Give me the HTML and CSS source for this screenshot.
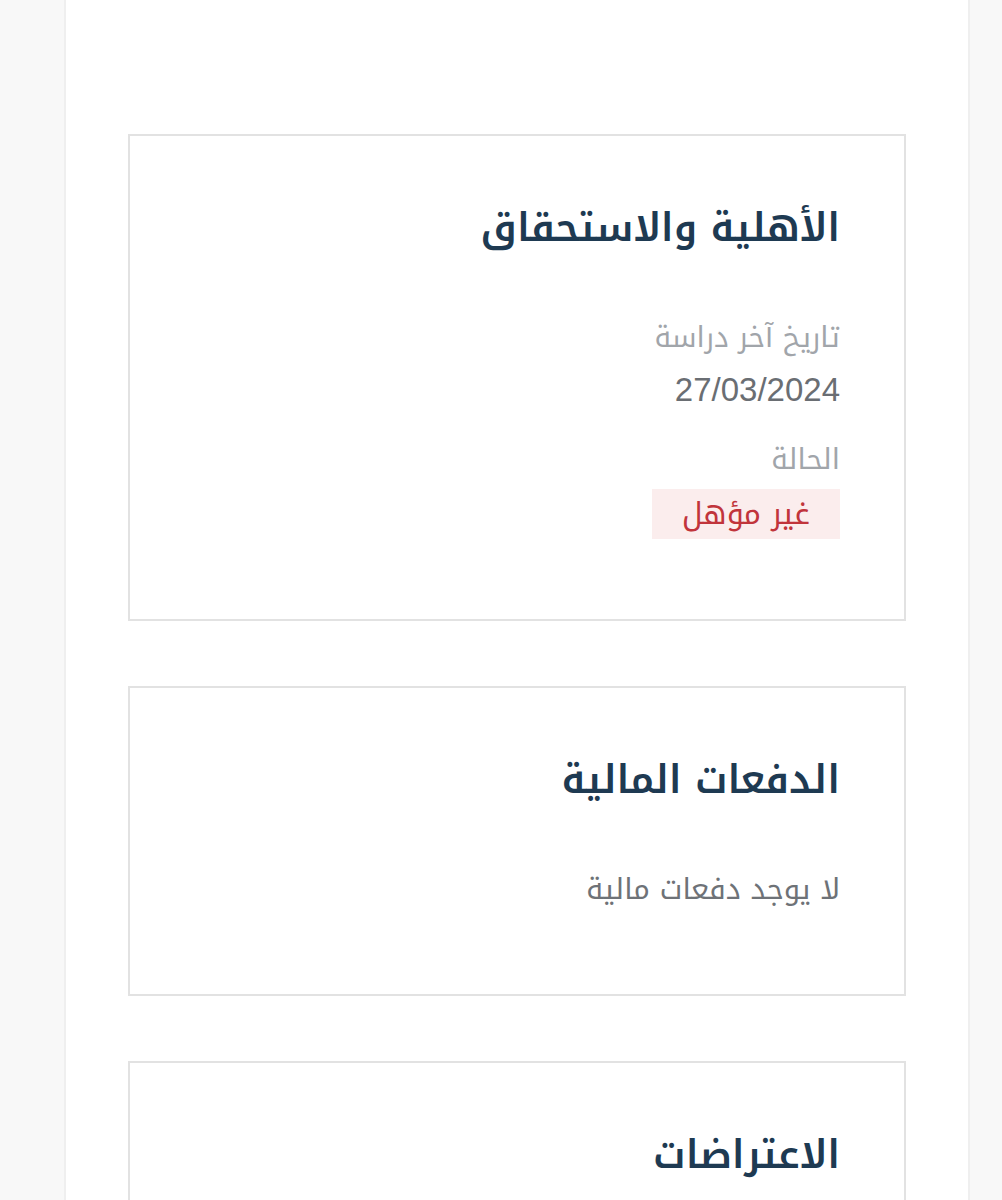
FILE: index.html
```html
<!DOCTYPE html>
<html lang="ar" dir="rtl">
<head>
<meta charset="UTF-8">
<meta name="viewport" content="width=device-width, initial-scale=1.0">
<title>الأهلية والاستحقاق</title>
<link rel="stylesheet" href="styles.css">
</head>
<body>

<div class="page">

    <div class="card">
        <h2 class="card-title">الأهلية والاستحقاق</h2>
        <div class="field">
            <div class="label">تاريخ آخر دراسة</div>
            <div class="value">27/03/2024</div>
        </div>
        <div class="field">
            <div class="label">الحالة</div>
            <span class="badge">غير مؤهل</span>
        </div>
    </div>

    <div class="card">
        <h2 class="card-title">الدفعات المالية</h2>
        <div class="empty">لا يوجد دفعات مالية</div>
    </div>

    <div class="card">
        <h2 class="card-title">الاعتراضات</h2>
    </div>

</div>

</body>
</html>
```

FILE: styles.css
```css
body {
    margin: 0;
    background: #f8f8f8;
    font-family: "Noto Kufi Arabic", "Droid Arabic Kufi", "DejaVu Sans", sans-serif;
}

.page {
    margin: 0 32px 0 64px;
    min-height: 1200px;
    background: #fff;
    border-left: 2px solid #efefef;
    border-right: 2px solid #efefef;
    padding: 134px 62px 0 62px;
    box-sizing: border-box;
}

.card {
    border: 2px solid #e2e2e2;
    padding: 62px 64px 80px;
    margin-bottom: 65px;
    display: flex;
    flex-direction: column;
    align-items: flex-start;
}

.card-title {
    margin: 0 0 58px;
    font-size: 39px;
    font-weight: 600;
    color: #1e3a52;
    line-height: 60px;
}

.field {
    display: flex;
    flex-direction: column;
    align-items: flex-start;
}

.field + .field {
    margin-top: 24px;
}

.label {
    font-size: 28.5px;
    color: #a1a5aa;
    line-height: 44px;
}

.value {
    margin-top: 6px;
    font-family: "Liberation Sans", sans-serif;
    font-size: 33px;
    color: #6a6e73;
    line-height: 48px;
}

.badge {
    margin-top: 7px;
    background: #fbeded;
    color: #c1343b;
    font-size: 30.5px;
    padding: 0 30px;
    line-height: 50px;
}

.empty {
    font-size: 29px;
    color: #6e7277;
    line-height: 44px;
    margin-bottom: 2px;
}
```
